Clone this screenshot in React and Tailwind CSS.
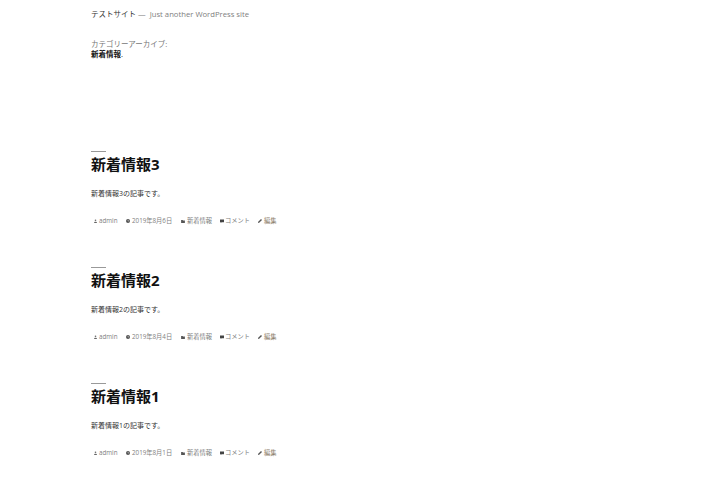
import React from "react";

const posts = [
  { title: "新着情報3", body: "新着情報3の記事です。", date: "2019年8月6日" },
  { title: "新着情報2", body: "新着情報2の記事です。", date: "2019年8月4日" },
  { title: "新着情報1", body: "新着情報1の記事です。", date: "2019年8月1日" },
];

const UserIcon = () => (
  <svg width="3" height="4" viewBox="0 0 8 10" fill="#666" className="mr-[2px]">
    <circle cx="4" cy="3" r="2.2" />
    <path d="M0 10 C0 6 8 6 8 10 Z" />
  </svg>
);
const ClockIcon = () => (
  <svg width="4" height="4" viewBox="0 0 10 10" className="mr-[2px]">
    <circle cx="5" cy="5" r="5" fill="#555" />
    <path d="M5 2.5V5H7.5" stroke="#fff" strokeWidth="1" fill="none" />
  </svg>
);
const FolderIcon = () => (
  <svg width="4" height="3" viewBox="0 0 10 8" fill="#555" className="mr-[2px]">
    <path d="M0 0H4L5 1.5H10V8H0Z" />
  </svg>
);
const CommentIcon = () => (
  <svg width="4" height="4" viewBox="0 0 10 10" fill="#444" className="mr-[1px]">
    <path d="M0 1H10V8H4L2 10V8H0Z" />
  </svg>
);
const PencilIcon = () => (
  <svg width="4" height="4" viewBox="0 0 10 10" fill="#555" className="mr-[2px]">
    <path d="M7.5 0L10 2.5L3 9.5L0 10L0.5 7Z" />
  </svg>
);

const Meta = ({ date }) => (
  <div className="flex items-center h-[10px] text-[6.25px] leading-[10px] text-[#808080] whitespace-nowrap">
    <span className="flex items-center ml-[3px] w-[32px]"><UserIcon />admin</span>
    <span className="flex items-center w-[55px]"><ClockIcon />{date}</span>
    <span className="flex items-center w-[39px]"><FolderIcon />新着情報</span>
    <span className="flex items-center w-[38px]"><CommentIcon />コメント</span>
    <span className="flex items-center text-[#8a7a66]"><PencilIcon />編集</span>
  </div>
);

const Post = ({ post }) => (
  <article className="h-[116px]">
    <div className="w-[15px] h-px bg-[#999]" />
    <h2 className="mt-[1px] text-[15px] leading-[22px] font-bold text-[#111]">{post.title}</h2>
    <p className="mt-[14px] text-[7px] leading-[10px] text-[#333]">{post.body}</p>
    <div className="mt-[17px]"><Meta date={post.date} /></div>
  </article>
);

export default function App() {
  return (
    <div className="w-[720px] h-[480px] overflow-hidden bg-white pl-[91px] font-['Open_Sans','Noto_Sans_CJK_JP',sans-serif]">
      <header className="pt-[9px] flex items-start text-[7.5px] leading-[11px] whitespace-nowrap">
        <span className="text-[#333]">テストサイト</span>
        <span className="ml-[2px] text-[#808080] text-[7.7px]">— &nbsp;Just another WordPress site</span>
      </header>
      <div className="mt-[19px] text-[7.5px] leading-[10px] text-[#767676]">
        <div>カテゴリーアーカイブ:</div>
        <div className="font-bold text-[#111]">新着情報<span className="font-normal">.</span></div>
      </div>
      <main className="mt-[92px]">
        {posts.map((post) => <Post key={post.title} post={post} />)}
      </main>
    </div>
  );
}
